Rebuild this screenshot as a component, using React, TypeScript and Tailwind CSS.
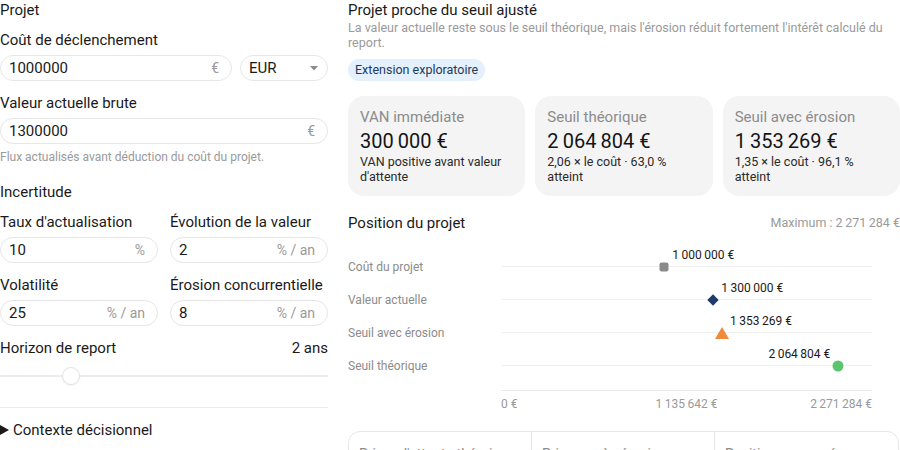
import React from "react";

const TS = "\u2009";
const fmt = (n: number) =>
  Math.round(n)
    .toString()
    .replace(/\B(?=(\d{3})+(?!\d))/g, TS) + "\u00a0€";

const MAX = 2271284;

function Field({ value, unit }: { value: string; unit: string }) {
  return (
    <div className="flex h-[26px] items-center justify-between rounded-[13px] border border-[#e6e6e6] bg-white pl-2 pr-3">
      <span className="text-[15px] text-[#1a1a1a]">{value}</span>
      <span className="text-[14px] text-[#9a9a9a]">{unit}</span>
    </div>
  );
}

function Card({ label, value, sub }: { label: string; value: string; sub: React.ReactNode }) {
  return (
    <div className="h-[100px] rounded-2xl bg-[#f4f4f4] px-3 pt-[11px]">
      <p className="text-[15px] leading-5 text-[#8c8c8c]">{label}</p>
      <p className="mt-[2px] text-[20px] leading-6 text-[#141414]">{value}</p>
      <p className="mt-[1px] text-[12.5px] leading-[15px] text-[#2a2a2a]">{sub}</p>
    </div>
  );
}

const rows = [
  { label: "Coût du projet", v: 1000000, shape: "square" },
  { label: "Valeur actuelle", v: 1300000, shape: "diamond" },
  { label: "Seuil avec érosion", v: 1353269, shape: "triangle" },
  { label: "Seuil théorique", v: 2064804, shape: "circle" },
];

function Marker({ shape }: { shape: string }) {
  if (shape === "square") return <div className="h-[9px] w-[9px] rounded-[2px] bg-[#8a8a8a]" />;
  if (shape === "diamond") return <div className="h-[8px] w-[8px] rotate-45 bg-[#1d3a6b]" />;
  if (shape === "triangle")
    return (
      <svg width="14" height="12" viewBox="0 0 14 12">
        <polygon points="7,0 14,12 0,12" fill="#ef8a3c" />
      </svg>
    );
  return <div className="h-[11px] w-[11px] rounded-full bg-[#5ac56e]" />;
}

export default function App() {
  return (
    <div
      className="h-[450px] w-[900px] overflow-hidden bg-white"
      style={{ fontFamily: "Roboto, 'Noto Sans', sans-serif" }}
    >
      <div className="grid grid-cols-[328px_552px] gap-5">
        {/* left column */}
        <div className="flex flex-col">
          <h2 className="text-[15px] leading-5 text-[#1a1a1a]">Projet</h2>
          <label className="mt-[10px] text-[15px] leading-5 text-[#1a1a1a]">Coût de déclenchement</label>
          <div className="mt-[5px] flex gap-2">
            <div className="w-[232px]">
              <Field value="1000000" unit="€" />
            </div>
            <div className="flex h-[26px] flex-1 items-center justify-between rounded-[13px] border border-[#e6e6e6] pl-2 pr-[9px]">
              <span className="text-[15px] text-[#1a1a1a]">EUR</span>
              <svg width="8" height="5" viewBox="0 0 8 5">
                <polygon points="0,0 8,0 4,4.5" fill="#8c8c8c" />
              </svg>
            </div>
          </div>
          <label className="mt-3 text-[15px] leading-5 text-[#1a1a1a]">Valeur actuelle brute</label>
          <div className="mt-[5px]">
            <Field value="1300000" unit="€" />
          </div>
          <p className="mt-[5px] text-[12px] leading-4 text-[#9a9a9a]">
            Flux actualisés avant déduction du coût du projet.
          </p>
          <h2 className="mt-[17px] text-[15px] leading-5 text-[#1a1a1a]">Incertitude</h2>
          <div className="mt-[10px] grid grid-cols-2 gap-x-3">
            <div>
              <label className="block whitespace-nowrap text-[15px] leading-5 text-[#1a1a1a]">Taux d'actualisation</label>
              <div className="mt-[5px]">
                <Field value="10" unit="%" />
              </div>
            </div>
            <div>
              <label className="block whitespace-nowrap text-[15px] leading-5 text-[#1a1a1a]">Évolution de la valeur</label>
              <div className="mt-[5px]">
                <Field value="2" unit="% / an" />
              </div>
            </div>
            <div className="mt-3">
              <label className="block whitespace-nowrap text-[15px] leading-5 text-[#1a1a1a]">Volatilité</label>
              <div className="mt-[5px]">
                <Field value="25" unit="% / an" />
              </div>
            </div>
            <div className="mt-3">
              <label className="block whitespace-nowrap text-[15px] leading-5 text-[#1a1a1a]">Érosion concurrentielle</label>
              <div className="mt-[5px]">
                <Field value="8" unit="% / an" />
              </div>
            </div>
          </div>
          <div className="mt-3 flex justify-between text-[15px] leading-5 text-[#1a1a1a]">
            <span>Horizon de report</span>
            <span>2 ans</span>
          </div>
          <div className="relative mt-2 h-5">
            <div className="absolute left-0 right-0 top-[9px] h-[2px] bg-[#ececec]" />
            <div className="absolute left-[62px] top-[1px] h-[18px] w-[18px] rounded-full border border-[#e3e3e3] bg-white shadow-[0_1px_2px_rgba(0,0,0,0.06)]" />
          </div>
          <div className="mt-[21px] h-px bg-[#ececec]" />
          <div className="mt-3 flex items-center gap-[4px] text-[15px] leading-5 text-[#1a1a1a]">
            <svg width="9" height="10" viewBox="0 0 9 10">
              <polygon points="0,0 9,5 0,10" fill="#1a1a1a" />
            </svg>
            <span>Contexte décisionnel</span>
          </div>
        </div>

        {/* right column */}
        <div className="flex flex-col">
          <h2 className="text-[15px] leading-5 text-[#1a1a1a]">Projet proche du seuil ajusté</h2>
          <p className="text-[12.5px] leading-[15px] text-[#9a9a9a]">
            La valeur actuelle reste sous le seuil théorique, mais l'érosion réduit fortement l'intérêt calculé du report.
          </p>
          <div className="mt-[7px]">
            <span className="inline-flex h-[22px] items-center rounded-full bg-[#e4f0fc] px-[7px] text-[12.5px] text-[#1d3a5c]">
              Extension exploratoire
            </span>
          </div>
          <div className="mt-[15px] grid grid-cols-3 gap-2.5">
            <Card label="VAN immédiate" value={fmt(300000)} sub="VAN positive avant valeur d'attente" />
            <Card label="Seuil théorique" value={fmt(2064804)} sub="2,06 × le coût · 63,0 % atteint" />
            <Card label="Seuil avec érosion" value={fmt(1353269)} sub="1,35 × le coût · 96,1 % atteint" />
          </div>

          <div className="mt-[17px] flex items-center justify-between leading-5">
            <h3 className="text-[15px] text-[#1a1a1a]">Position du projet</h3>
            <span className="text-[12.5px] text-[#9a9a9a]">Maximum : {fmt(MAX)}</span>
          </div>

          <div className="mt-[17px]">
            {rows.map((r) => {
              const pct = (r.v / MAX) * 100;
              const flip = pct > 80;
              return (
                <div key={r.label} className="flex h-[33px] items-center">
                  <span className="w-[153px] text-[12px] text-[#8c8c8c]">{r.label}</span>
                  <div className="relative h-full w-[371px]">
                    <div className="absolute left-0 right-0 top-[16px] h-px bg-[#efefef]" />
                    <div
                      className="absolute top-[16.5px] -translate-x-1/2 -translate-y-1/2"
                      style={{ left: `${pct}%` }}
                    >
                      <Marker shape={r.shape} />
                    </div>
                    <span
                      className={
                        flip
                          ? "absolute top-[-4px] -translate-x-full whitespace-nowrap text-[12px] text-[#1a1a1a]"
                          : "absolute top-[-4px] whitespace-nowrap text-[12px] text-[#1a1a1a]"
                      }
                      style={{ left: flip ? `calc(${pct}% - 8px)` : `calc(${pct}% + 8px)` }}
                    >
                      {fmt(r.v)}
                    </span>
                  </div>
                </div>
              );
            })}
            <div className="flex">
              <div className="w-[153px]" />
              <div className="w-[371px]">
                <div className="mt-2 h-px bg-[#ececec]" />
                <div className="relative mt-[5px] flex justify-between text-[12px] leading-4 text-[#9a9a9a]">
                  <span>0 €</span>
                  <span className="absolute left-1/2 -translate-x-1/2">{fmt(MAX / 2)}</span>
                  <span>{fmt(MAX)}</span>
                </div>
              </div>
            </div>
          </div>

          <div className="mt-[19px] grid h-[40px] w-[551px] grid-cols-3 rounded-t-xl border border-[#e6e6e6]">
            {["Prime d'attente théorique", "Prime après érosion", "Position conservée"].map((t, i) => (
              <div
                key={t}
                className={i < 2 ? "border-r border-[#e6e6e6] px-[10px] pt-[10px]" : "px-[10px] pt-[10px]"}
              >
                <span className="whitespace-nowrap text-[14px] text-[#8c8c8c]">{t}</span>
              </div>
            ))}
          </div>
        </div>
      </div>
    </div>
  );
}
